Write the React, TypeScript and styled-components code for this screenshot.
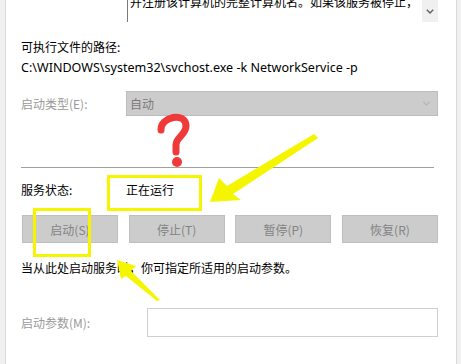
import React from "react";
import styled, { createGlobalStyle } from "styled-components";

const Global = createGlobalStyle`
  html, body { margin: 0; padding: 0; background: #f0f0f0; }
  body { font-family: "Segoe UI", "Noto Sans", "Noto Sans CJK SC", sans-serif; }
`;

const Page = styled.div`
  position: relative;
  width: 461px;
  height: 364px;
  padding: 0 4px 0 5px;
  box-sizing: border-box;
  background: #f0f0f0;
  overflow: hidden;
`;

const Panel = styled.div`
  height: 100%;
  box-sizing: border-box;
  background: #ffffff;
  border-left: 1px solid #dadada;
  border-right: 1px solid #dadada;
  padding: 0 18px 0 15px;
  display: flex;
  flex-direction: column;
  font-size: 12px;
  color: #000;
`;

const DescRow = styled.div`
  display: grid;
  grid-template-columns: 106px 1fr;
  height: 22px;
`;

const DescBox = styled.div`
  display: flex;
  border-left: 1px solid #7a7a7a;
  height: 22px;
  overflow: hidden;
`;

const DescText = styled.div`
  flex: 1;
  margin-top: -7px;
  padding-left: 2px;
  line-height: 18px;
  white-space: nowrap;
  overflow: hidden;
  font-family: "Noto Sans CJK SC", sans-serif;
`;

const ScrollBar = styled.div`
  width: 16px;
  background: #f0f0f0;
  display: flex;
  justify-content: center;
  padding-top: 9px;
  box-sizing: border-box;
`;

const Text = styled.div<{ $gray?: boolean; $mt?: number }>`
  line-height: 20px;
  height: 20px;
  margin-top: ${(p) => p.$mt ?? 0}px;
  color: ${(p) => (p.$gray ? "#9a9a9a" : "#000")};
  white-space: nowrap;
  font-family: "Noto Sans CJK SC", sans-serif;
`;

const PathText = styled(Text)`
  font-family: "Segoe UI", "Noto Sans", sans-serif;
  font-size: 12.55px;
`;

const FieldRow = styled.div<{ $label: number; $h: number; $mt: number }>`
  display: grid;
  grid-template-columns: ${(p) => p.$label}px 1fr;
  align-items: center;
  height: ${(p) => p.$h}px;
  margin-top: ${(p) => p.$mt}px;
`;

const Combo = styled.div`
  height: 25px;
  box-sizing: border-box;
  background: #cccccc;
  border: 1px solid #bdbdbd;
  display: flex;
  align-items: center;
  justify-content: space-between;
  padding: 0 6px 0 3px;
  color: #7a7a7a;
  font-family: "Noto Sans CJK SC", sans-serif;
`;

const Separator = styled.div`
  height: 1px;
  background: #a0a0a0;
  margin: 51px 4px 0 0;
`;

const ButtonRow = styled.div`
  display: flex;
  justify-content: space-between;
  margin-top: 15px;
  padding-left: 1px;
`;

const Btn = styled.div`
  width: 96px;
  height: 28px;
  box-sizing: border-box;
  background: #cccccc;
  border: 1px solid #bfbfbf;
  display: flex;
  align-items: center;
  justify-content: center;
  color: #838383;
  font-family: "Noto Sans CJK SC", sans-serif;
`;

const Input = styled.div`
  height: 29px;
  box-sizing: border-box;
  background: #fff;
  border: 1px solid #cfcfcf;
`;

const Overlay = styled.svg`
  position: absolute;
  left: 0;
  top: 0;
  pointer-events: none;
`;

const Chevron = ({ color, w = 8 }: { color: string; w?: number }) => (
  <svg width={w} height={5} viewBox="0 0 8 5">
    <path d="M0.8 0.8 L4 4 L7.2 0.8" fill="none" stroke={color} strokeWidth={1.4} />
  </svg>
);

export default function App() {
  const yellow = "#f5f500";
  return (
    <>
      <Global />
      <Page>
        <Panel>
          <DescRow>
            <span />
            <DescBox>
              <DescText>并注册该计算机的完整计算机名。如果该服务被停止，</DescText>
              <ScrollBar>
                <Chevron color="#606060" />
              </ScrollBar>
            </DescBox>
          </DescRow>
          <Text $mt={15}>可执行文件的路径:</Text>
          <PathText $mt={1}>C:\WINDOWS\system32\svchost.exe -k NetworkService -p</PathText>
          <FieldRow $label={105} $h={25} $mt={13}>
            <Text $gray>启动类型(E):</Text>
            <Combo>
              <span>自动</span>
              <Chevron color="#b8b8b8" w={9} />
            </Combo>
          </FieldRow>
          <Separator />
          <FieldRow $label={105} $h={20} $mt={12}>
            <Text>服务状态:</Text>
            <Text>正在运行</Text>
          </FieldRow>
          <ButtonRow>
            <Btn>启动(S)</Btn>
            <Btn>停止(T)</Btn>
            <Btn>暂停(P)</Btn>
            <Btn>恢复(R)</Btn>
          </ButtonRow>
          <Text $mt={15}>当从此处启动服务时，你可指定所适用的启动参数。</Text>
          <FieldRow $label={126} $h={29} $mt={30}>
            <Text $gray>启动参数(M):</Text>
            <Input />
          </FieldRow>
        </Panel>
        <Overlay width={461} height={364} viewBox="0 0 461 364">
          <path
            d="M161 130 C 160 117, 186 111, 186 126 C 186 135, 176 137, 176 145 L 176 152"
            fill="none"
            stroke="#f03a3a"
            strokeWidth={7}
            strokeLinecap="round"
            strokeLinejoin="round"
          />
          <circle cx={177} cy={162} r={5} fill="#f03a3a" />
          <rect x={108.5} y={176.5} width={92} height={33} fill="none" stroke={yellow} strokeWidth={3} />
          <rect x={34.5} y={209.5} width={55} height={46} fill="none" stroke={yellow} strokeWidth={3} />
          <polygon
            points="210,202 219,178 227,186 314,134 318,138 233,194 241,200"
            fill={yellow}
          />
          <polygon
            points="117,260 136,266 131,271 160,300 157,301 126,276 121,279"
            fill={yellow}
          />
        </Overlay>
      </Page>
    </>
  );
}
